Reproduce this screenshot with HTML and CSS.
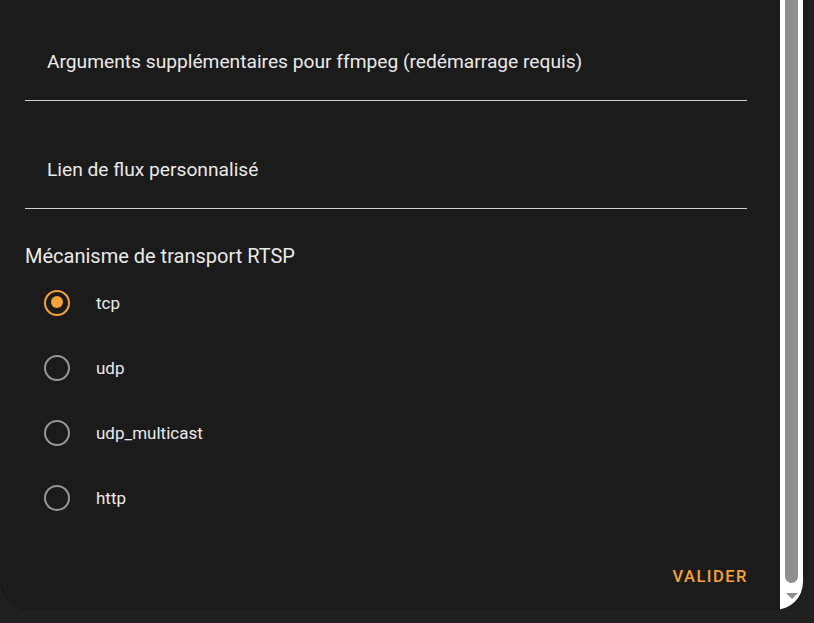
FILE: index.html
```html
<!DOCTYPE html>
<html lang="fr">
<head>
  <meta charset="UTF-8" />
  <meta name="viewport" content="width=device-width, initial-scale=1.0"/>
  <title>Options de la caméra</title>
  <link rel="stylesheet" href="styles.css">
</head>
<body>
  <!-- Dialog (scrolled to the bottom) -->
  <div class="dialog">
    <div class="dialog-content">
      <div class="field field-first">
        <span class="field-label">Arguments supplémentaires pour ffmpeg (redémarrage requis)</span>
      </div>
      <div class="field">
        <span class="field-label">Lien de flux personnalisé</span>
      </div>

      <div class="group-title">Mécanisme de transport RTSP</div>
      <ul class="radio-list">
        <li class="radio-row checked"><span class="radio"></span><span class="radio-label">tcp</span></li>
        <li class="radio-row"><span class="radio"></span><span class="radio-label">udp</span></li>
        <li class="radio-row"><span class="radio"></span><span class="radio-label">udp_multicast</span></li>
        <li class="radio-row"><span class="radio"></span><span class="radio-label">http</span></li>
      </ul>

      <div class="actions">
        <span class="btn-text">VALIDER</span>
      </div>
    </div>

    <!-- Scrollbar -->
    <div class="scrollbar">
      <div class="thumb"></div>
      <div class="arrow"></div>
    </div>
  </div>
</body>
</html>
```

FILE: styles.css
```css
body {
  margin: 0;
  background-color: #1f1f1f;
  font-family: Roboto, "Liberation Sans", sans-serif;
  color: #e1e1e1;
}

/* Dialog */
.dialog {
  display: flex;
  width: 803px;
  height: 610px;
  background-color: #1b1b1b;
  border-radius: 0 0 28px 28px;
  overflow: hidden;
}
.dialog-content {
  flex: 1;
  padding: 0 33px 0 25px;
}

/* Text fields */
.field {
  height: 56px;
  margin-top: 51px;
  border-bottom: 1px solid #cfcfcf;
  padding-left: 22px;
}
.field-first {
  margin-top: 44px;
}
.field-label {
  display: block;
  padding-top: 6px;
  font-size: 19.2px;
  line-height: 24px;
  color: #eaeaea;
}

/* Radio group */
.group-title {
  margin-top: 35px;
  font-size: 20px;
  line-height: 24px;
  color: #eaeaea;
}
.radio-list {
  list-style: none;
  margin: 2px 0 0;
  padding: 0;
}
.radio-row {
  display: flex;
  align-items: center;
  height: 65px;
  padding-left: 19px;
}
.radio {
  box-sizing: border-box;
  width: 26px;
  height: 26px;
  border: 2.5px solid #979797;
  border-radius: 50%;
  margin-right: 26px;
  position: relative;
}
.radio-row.checked .radio {
  border-color: #f4a23a;
}
.radio-row.checked .radio::after {
  content: "";
  position: absolute;
  left: 4.5px;
  top: 4.5px;
  width: 12px;
  height: 12px;
  border-radius: 50%;
  background-color: #f4a23a;
}
.radio-label {
  font-size: 17px;
  color: #eaeaea;
}

/* Actions */
.actions {
  display: flex;
  justify-content: flex-end;
  margin-top: 35px;
}
.btn-text {
  color: #f4a23a;
  font-size: 16.5px;
  font-weight: 500;
  letter-spacing: 1.5px;
  line-height: 24px;
  margin-right: -1px;
}

/* Scrollbar */
.scrollbar {
  width: 23px;
  background-color: #fff;
  display: flex;
  flex-direction: column;
  align-items: center;
}
.thumb {
  width: 13px;
  height: 583px;
  background-color: #8f8f8f;
  border-radius: 0 0 7px 7px;
}
.arrow {
  margin-top: 10px;
  width: 0;
  height: 0;
  border-left: 6px solid transparent;
  border-right: 6px solid transparent;
  border-top: 6px solid #8f8f8f;
}
```
